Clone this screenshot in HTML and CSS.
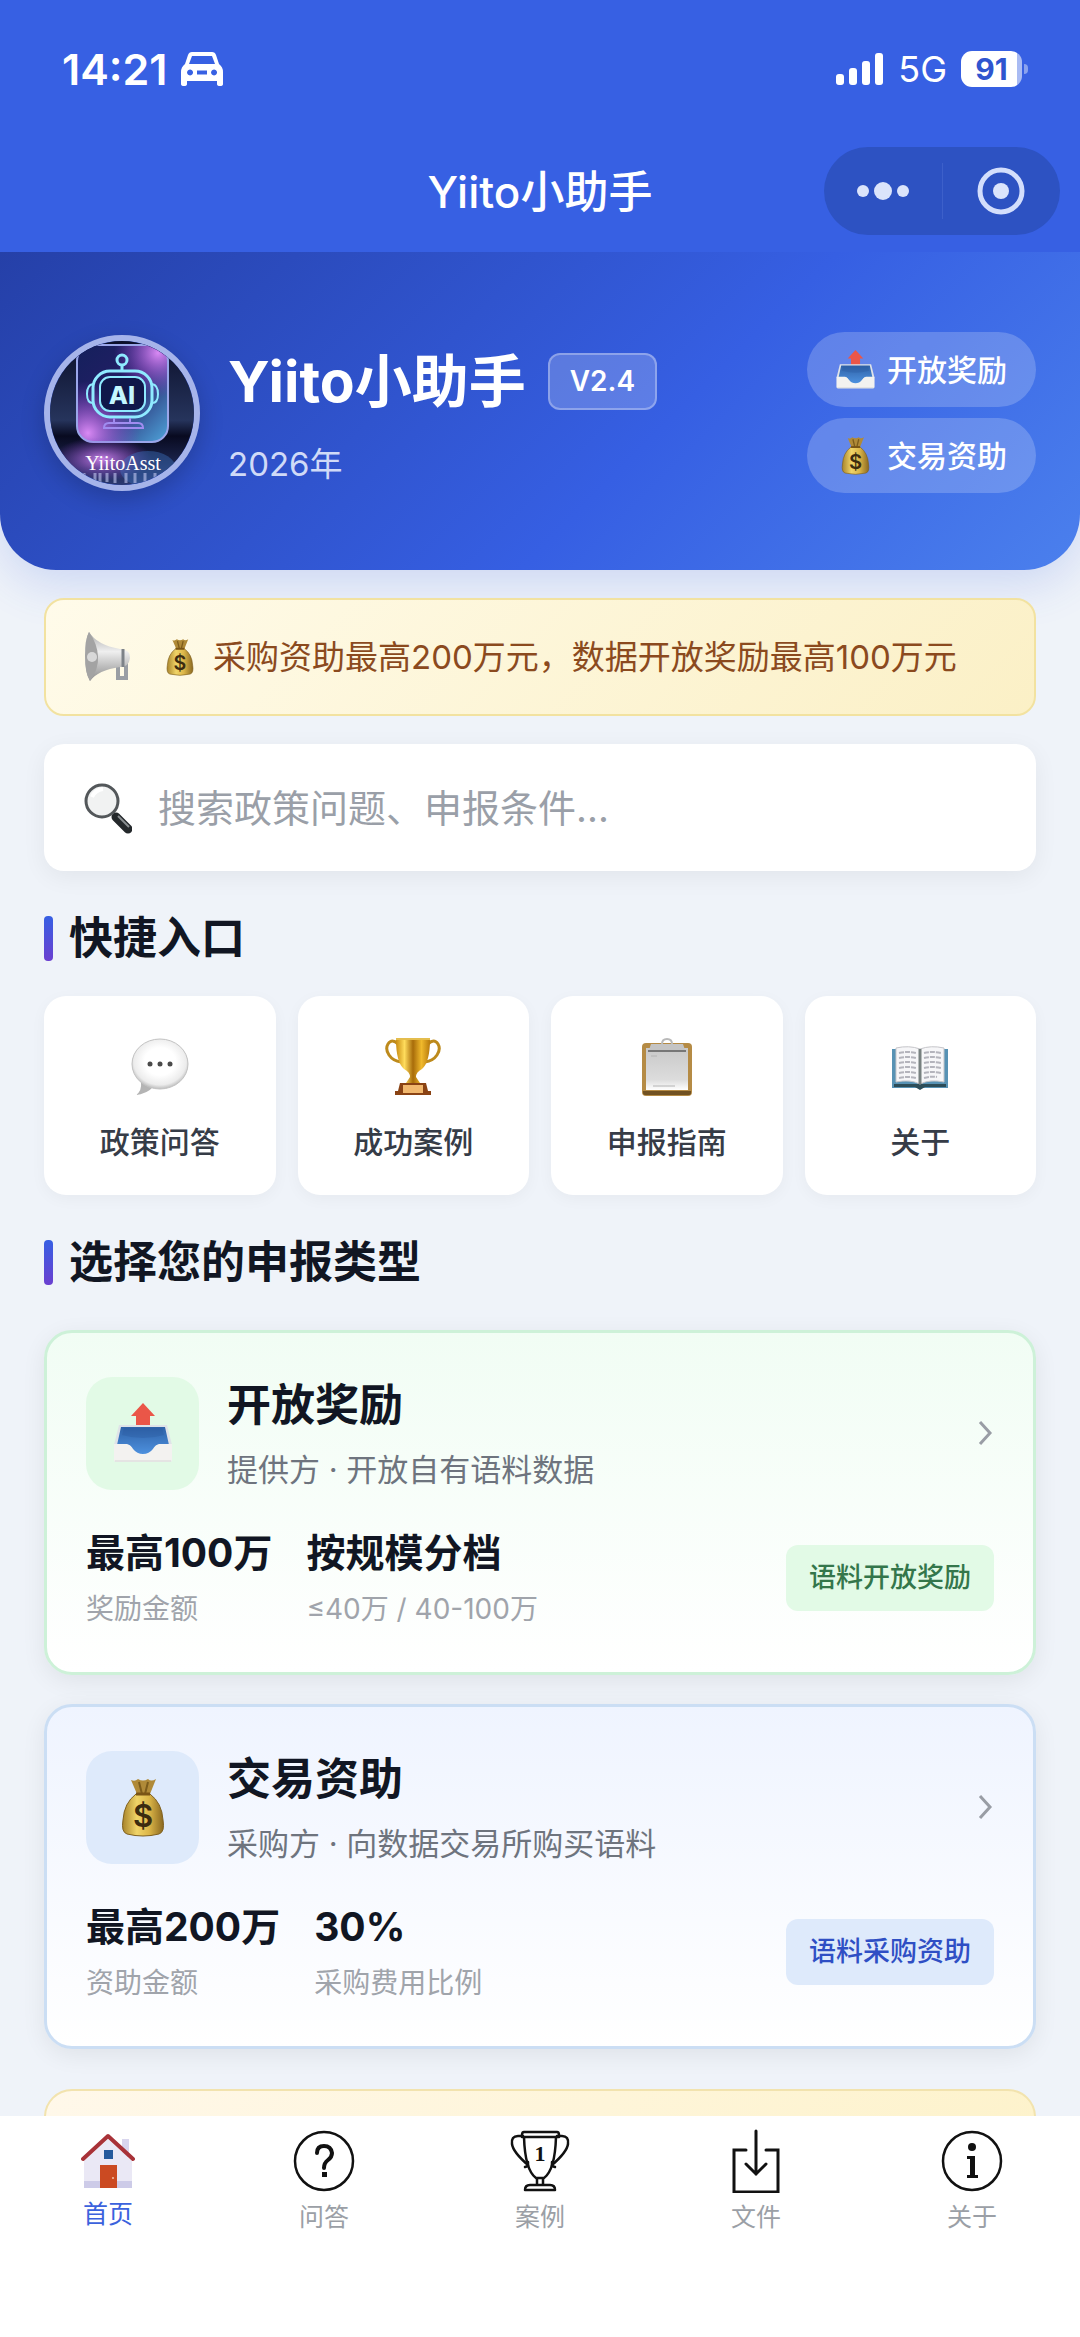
FILE: index.html
```html
<!DOCTYPE html>
<html lang="zh-CN">
<head>
  <meta charset="UTF-8">
  <meta name="viewport" content="width=device-width, initial-scale=1">
  <title>Yiito小助手</title>
  <link rel="stylesheet" href="styles.css">
</head>
<body>

  <!-- Shared icons -->
  <svg class="sprite" aria-hidden="true">
    <defs>
      <linearGradient id="gold" x1="0" x2="1" y1="0" y2="0">
        <stop offset="0" stop-color="#a8842c"/>
        <stop offset=".35" stop-color="#f0d468"/>
        <stop offset=".65" stop-color="#dcb648"/>
        <stop offset="1" stop-color="#8a6820"/>
      </linearGradient>
      <linearGradient id="cup" x1="0" x2="1" y1="0" y2="0">
        <stop offset="0" stop-color="#c98d12"/>
        <stop offset=".25" stop-color="#ffdc5c"/>
        <stop offset=".5" stop-color="#a86c0a"/>
        <stop offset=".75" stop-color="#f0b92c"/>
        <stop offset="1" stop-color="#b87a0c"/>
      </linearGradient>
      <linearGradient id="blue" x1="0" x2="0" y1="0" y2="1">
        <stop offset="0" stop-color="#2f62a8"/>
        <stop offset="1" stop-color="#4f94e2"/>
      </linearGradient>
      <linearGradient id="horn" x1="0" x2="0" y1="0" y2="1">
        <stop offset="0" stop-color="#a9a9a9"/>
        <stop offset=".4" stop-color="#efefef"/>
        <stop offset="1" stop-color="#8c8c8c"/>
      </linearGradient>
      <radialGradient id="bubble" cx=".5" cy=".45" r=".55">
        <stop offset=".5" stop-color="#ffffff"/>
        <stop offset=".85" stop-color="#ececec"/>
        <stop offset="1" stop-color="#bdbdbd"/>
      </radialGradient>
      <linearGradient id="paper" x1="0" x2="0" y1="0" y2="1">
        <stop offset="0" stop-color="#c9c9c9"/>
        <stop offset=".75" stop-color="#dcdcdc"/>
        <stop offset="1" stop-color="#ffffff"/>
      </linearGradient>
    </defs>
    <symbol id="icon-tray" viewBox="0 0 60 60">
      <path d="M30 0 42 13H37V23H23V13H18Z" fill="#ea5648"/>
      <path d="M6 22H54L59 42V57Q59 59 57 59H3Q1 59 1 57V42Z" fill="#dfe3e8"/>
      <path d="M8 24H52L56 42H44L36 51Q30 55 24 51L16 42H4Z" fill="url(#blue)"/>
      <path d="M11 25H49L51 32Q30 38 9 32Z" fill="#28579c" opacity=".3"/>
      <path d="M1 41H14Q18 42 20 46Q24 51 30 51T40 46Q42 42 46 41H59V57Q59 59 57 59H3Q1 59 1 57Z" fill="#f3f2f0"/>
      <path d="M2 58H58" stroke="#d6d6d6" stroke-width="1"/>
    </symbol>
    <symbol id="icon-bag" viewBox="0 0 60 60">
      <path d="M18 3Q22 5 25 2Q30 5 35 2Q38 5 43 2L37 17H24Z" fill="#b08a38"/>
      <path d="M26 5 29 17M35 5 32 17" stroke="#7c5c1c" stroke-width="2"/>
      <path d="M23 17H37Q49 26 50 43Q52 55 46 57Q30 61 14 57Q8 55 10 43Q11 26 23 17Z" fill="url(#gold)" stroke="#80611f" stroke-width="1"/>
      <path d="M23 17H37" stroke="#7a5516" stroke-width="3"/>
    </symbol>
  </svg>

  <div class="app">

    <header class="top">
      <div class="status">
        <div class="status-left">
          <span class="time">14:21</span>
          <svg class="car" viewBox="0 0 42 34" aria-hidden="true">
            <path fill="#fff" fill-rule="evenodd" d="M11 0H31Q34 0 35 3L38 12Q42 15 42 20V32Q42 34 39 34Q36 34 36 32V29H6V32Q6 34 3 34Q0 34 0 32V20Q0 15 4 12L7 3Q8 0 11 0ZM11 4 8 12H34L31 4ZM9 17.500a3 3 0 1 0 .1 0ZM33 17.500a3 3 0 1 0 .1 0ZM16 18.500H26V22.500H16Z"/>
          </svg>
        </div>
        <div class="status-right">
          <svg class="signal" viewBox="0 0 48 32" aria-hidden="true">
            <g fill="#fff">
              <rect x="0" y="21" width="8" height="11" rx="3"/>
              <rect x="13" y="15" width="8" height="17" rx="3"/>
              <rect x="26" y="8" width="8" height="24" rx="3"/>
              <rect x="39" y="0" width="8" height="32" rx="3"/>
            </g>
          </svg>
          <span class="network">5G</span>
          <span class="battery">91</span>
        </div>
      </div>
      <div class="nav">
        <span class="nav-title">Yiito小助手</span>
        <div class="capsule">
          <button type="button" class="capsule-button" aria-label="更多">
            <svg viewBox="0 0 54 20" width="54" height="20">
              <g fill="#dbe4fb"><circle cx="7" cy="10" r="6"/><circle cx="27" cy="10" r="9"/><circle cx="47" cy="10" r="6"/></g>
            </svg>
          </button>
          <button type="button" class="capsule-button" aria-label="关闭">
            <svg viewBox="0 0 48 48" width="48" height="48">
              <circle cx="24" cy="24" r="21" fill="none" stroke="#d3defc" stroke-width="5"/>
              <circle cx="24" cy="24" r="8" fill="#dbe4fb"/>
            </svg>
          </button>
        </div>
      </div>
    </header>

    <main class="content">

      <!-- Banner -->
      <section class="hero">
        <svg class="avatar" viewBox="0 0 144 144" role="img" aria-label="YiitoAsst">
          <defs>
            <linearGradient id="night" x1="0" x2="0" y1="0" y2="1">
              <stop offset="0" stop-color="#0b0f2a"/>
              <stop offset=".55" stop-color="#26345c"/>
              <stop offset=".66" stop-color="#080a20"/>
              <stop offset="1" stop-color="#2c3a72"/>
            </linearGradient>
            <linearGradient id="tile" x1="0" x2="1" y1="0" y2="1">
              <stop offset="0" stop-color="#14205c"/>
              <stop offset=".5" stop-color="#241e66"/>
              <stop offset="1" stop-color="#4fa6dc"/>
            </linearGradient>
            <radialGradient id="pink"><stop offset="0" stop-color="#d98af4"/><stop offset="1" stop-color="#8a3fd0" stop-opacity="0"/></radialGradient>
            <clipPath id="tile-clip"><rect x="27" y="4" width="91" height="97" rx="16"/></clipPath>
          </defs>
          <rect width="144" height="144" fill="url(#night)"/>
          <g clip-path="url(#tile-clip)">
            <rect x="27" y="4" width="91" height="97" fill="url(#tile)"/>
            <circle cx="108" cy="12" r="44" fill="url(#pink)"/>
            <circle cx="38" cy="92" r="52" fill="url(#pink)"/>
          </g>
          <rect x="27" y="4" width="91" height="97" rx="16" fill="none" stroke="#9aa6ea" stroke-width="2"/>
          <ellipse cx="52" cy="118" rx="50" ry="22" fill="url(#pink)" opacity=".9"/>
          <ellipse cx="98" cy="128" rx="28" ry="18" fill="#3f78c8" opacity=".4"/>
          <g fill="none" stroke="#8feaff" stroke-width="3">
            <circle cx="72" cy="19" r="5"/>
            <path d="M72 24V29"/>
            <rect x="43" y="30" width="59" height="46" rx="17"/>
            <rect x="50" y="36" width="45" height="34" rx="10" stroke-width="2" fill="#10174a"/>
            <path d="M43 43Q37 44 37 53T43 62M102 43Q108 44 108 53T102 62" stroke-width="2"/>
            <path d="M64 77V81M80 77V81M54 87Q54 82 59 82H88Q93 82 93 87Z" stroke-width="2" stroke="#a08cf0"/>
          </g>
          <text x="72" y="63" text-anchor="middle" class="avatar-ai">AI</text>
          <text x="73" y="129" text-anchor="middle" class="avatar-name">YiitoAsst</text>
          <path d="M34 132V138M45 132V142M50 132V142M57 132V141M65 132V142M76 132V142M85 132V142M95 132V141M105 132V138" stroke="#c4c9f2" stroke-width="3" opacity=".6"/>
        </svg>
        <div class="hero-text">
          <div class="hero-heading">
            <h1>Yiito小助手</h1>
            <span class="version">V2.4</span>
          </div>
          <p class="year">2026年</p>
        </div>
        <div class="hero-actions">
          <button type="button" class="pill"><svg class="pill-icon"><use href="#icon-tray"/></svg><span>开放奖励</span></button>
          <button type="button" class="pill">
            <svg class="pill-icon" viewBox="0 0 60 60" aria-hidden="true"><use href="#icon-bag"/><text x="30" y="50" text-anchor="middle" class="bag-sign">$</text></svg>
            <span>交易资助</span>
          </button>
        </div>
      </section>

      <div class="page">
        <!-- Notice -->
        <div class="notice">
          <svg class="row-icon" viewBox="0 0 48 52" aria-hidden="true">
            <path d="M34 32V47H42V22" fill="none" stroke="#9a9ea4" stroke-width="4"/>
            <path d="M5 1Q13 14 36 18Q47 19 46 27Q45 36 36 36Q14 39 6 50Q1 42 1 25T5 1Z" fill="url(#horn)"/>
            <path d="M5 1Q13 12 14 25T6 50Q1 42 1 25T5 1Z" fill="#a3a3a3"/>
            <circle cx="8" cy="26" r="5" fill="#d8d8d8"/>
            <path d="M39 18V36" stroke="#7d8288" stroke-width="3"/>
          </svg>
          <svg class="notice-bag" viewBox="0 0 60 60" aria-hidden="true"><use href="#icon-bag"/><text x="30" y="50" text-anchor="middle" class="bag-sign">$</text></svg>
          <span>采购资助最高200万元，数据开放奖励最高100万元</span>
        </div>

        <!-- Search -->
        <label class="search">
          <svg class="row-icon" viewBox="0 0 48 52" aria-hidden="true">
            <path d="M30 33 36 39" stroke="#8b8b8b" stroke-width="4"/>
            <path d="M32 35 44 47" stroke="#24282b" stroke-width="9" stroke-linecap="round"/>
            <path d="M34 34 45 45" stroke="#8a8e91" stroke-width="2"/>
            <circle cx="18" cy="19" r="16" fill="#f1f2f2" stroke="#53575a" stroke-width="3"/>
            <path d="M8 15Q11 8 19 7" fill="none" stroke="#fff" stroke-width="4"/>
          </svg>
          <input type="text" class="search-input" placeholder="搜索政策问题、申报条件..." aria-label="搜索">
        </label>

        <h2 class="section-title">快捷入口</h2>
        <div class="shortcuts">
          <a href="#" class="shortcut">
            <svg viewBox="0 0 58 58" aria-hidden="true">
              <path d="M10 44Q11 53 5 57Q16 56 23 48Z" fill="#b4b4b4"/>
              <ellipse cx="29" cy="26" rx="28" ry="25" fill="url(#bubble)" stroke="#c2c2c2" stroke-width="1"/>
              <g fill="#4a4a4a"><circle cx="19" cy="26" r="2.500"/><circle cx="29" cy="26" r="2.500"/><circle cx="39" cy="26" r="2.500"/></g>
            </svg>
            <span>政策问答</span>
          </a>
          <a href="#" class="shortcut">
            <svg viewBox="0 0 58 58" aria-hidden="true">
              <path d="M14 6Q8 0 4 6Q1 11 5 17Q9 23 17 24M44 6Q50 0 54 6Q57 11 53 17Q49 23 41 24" fill="none" stroke="#bd8a1c" stroke-width="3"/>
              <path d="M12 1H46Q46 24 38 31Q32 34 32 39L36 45H22L26 39Q26 34 20 31Q12 24 12 1Z" fill="url(#cup)"/>
              <path d="M12 1H46" stroke="#e4bd4e" stroke-width="2"/>
              <path d="M16 45H42L44 53H47V57H11V53H14Z" fill="#8a4314"/>
              <rect x="19" y="47" width="20" height="8" fill="#f1b86e"/>
            </svg>
            <span>成功案例</span>
          </a>
          <a href="#" class="shortcut">
            <svg viewBox="0 0 58 58" aria-hidden="true">
              <rect x="4" y="5" width="50" height="53" rx="4" fill="#b58b45"/>
              <path d="M5 53H53V55Q53 57 50 57H8Q5 57 5 55Z" fill="#715222"/>
              <rect x="8" y="10" width="42" height="42" fill="url(#paper)"/>
              <path d="M13 6H45L47 12H11Z" fill="#c4c4c4"/>
              <path d="M10 13H48" stroke="#777" stroke-width="2"/>
              <path d="M24 6Q24 1 29 1T34 6" fill="none" stroke="#b9b9b9" stroke-width="2"/>
              <path d="M13 18H19M15 48H37" stroke="#b4b4b4" stroke-width="1"/>
            </svg>
            <span>申报指南</span>
          </a>
          <a href="#" class="shortcut">
            <svg viewBox="0 0 58 58" aria-hidden="true">
              <path d="M1 11H57V50H1Z" fill="#5792b4"/>
              <path d="M3 46H55V49H34L29 52L24 49H3Z" fill="#2d4d58"/>
              <path d="M5 10Q18 7 29 11Q40 7 53 10V44Q39 41 29 46Q19 41 5 44Z" fill="#f6f6f8" stroke="#c5c5c9" stroke-width="1"/>
              <path d="M29 11V46" stroke="#77807f" stroke-width="3"/>
              <path d="M8 15Q17 13 25 15M8 20Q17 18 25 20M8 25Q17 23 25 25M8 30Q17 28 25 30M8 35Q17 33 25 35M8 40Q17 38 25 40M33 15Q41 13 50 15M33 20Q41 18 50 20M33 25Q41 23 50 25M33 30Q41 28 50 30M33 35Q41 33 50 35M33 40Q40 38 46 39" fill="none" stroke="#b4b4bc" stroke-width="2" stroke-dasharray="5 1"/>
            </svg>
            <span>关于</span>
          </a>
        </div>

        <h2 class="section-title">选择您的申报类型</h2>
        <div class="types">
          <article class="type-card green">
            <div class="type-head">
              <div class="type-icon"><svg><use href="#icon-tray"/></svg></div>
              <div class="type-text">
                <h3>开放奖励</h3>
                <p>提供方 · 开放自有语料数据</p>
              </div>
              <svg class="arrow" viewBox="0 0 18 26" aria-hidden="true"><path d="M4 2 14 13 4 24"/></svg>
            </div>
            <div class="type-foot">
              <dl class="stat"><dt>最高100万</dt><dd>奖励金额</dd></dl>
              <dl class="stat"><dt>按规模分档</dt><dd>≤40万 / 40-100万</dd></dl>
              <span class="tag">语料开放奖励</span>
            </div>
          </article>

          <article class="type-card blue">
            <div class="type-head">
              <div class="type-icon">
                <svg viewBox="0 0 60 60" aria-hidden="true"><use href="#icon-bag"/><text x="30" y="50" text-anchor="middle" class="bag-sign">$</text></svg>
              </div>
              <div class="type-text">
                <h3>交易资助</h3>
                <p>采购方 · 向数据交易所购买语料</p>
              </div>
              <svg class="arrow" viewBox="0 0 18 26" aria-hidden="true"><path d="M4 2 14 13 4 24"/></svg>
            </div>
            <div class="type-foot">
              <dl class="stat"><dt>最高200万</dt><dd>资助金额</dd></dl>
              <dl class="stat"><dt>30%</dt><dd>采购费用比例</dd></dl>
              <span class="tag">语料采购资助</span>
            </div>
          </article>
        </div>

        <div class="tips"></div>
      </div>
    </main>

    <nav class="tabs">
      <a href="#" class="tab active">
        <svg class="tab-home" viewBox="0 0 54 56" aria-hidden="true">
          <rect x="41" y="6" width="7" height="18" fill="#d9d6ee"/>
          <path d="M27 6 51 28V55H3V28Z" fill="#eae8f5"/>
          <path d="M3 48H51V55H3Z" fill="#cdcbe8"/>
          <rect x="23" y="17" width="9" height="9" fill="#25599c"/>
          <rect x="19" y="32" width="17" height="23" fill="#cb4a22"/>
          <circle cx="32" cy="45" r="1" fill="#f3c0a8"/>
          <path d="M2 26 27 3 52 26" fill="none" stroke="#a83238" stroke-width="4" stroke-linecap="round" stroke-linejoin="round"/>
        </svg>
        <span>首页</span>
      </a>
      <a href="#" class="tab">
        <svg viewBox="0 0 64 64" aria-hidden="true">
          <g fill="none" stroke="#111" stroke-width="2.500">
            <circle cx="32" cy="32" r="29"/>
            <path d="M25 24Q25 17 32 17T40 24Q40 28 36 31T32 39" stroke-width="4" stroke-linecap="round"/>
          </g>
          <rect x="30" y="43" width="5" height="5" fill="#111"/>
        </svg>
        <span>问答</span>
      </a>
      <a href="#" class="tab">
        <svg viewBox="0 0 64 64" aria-hidden="true">
          <g fill="none" stroke="#111" stroke-width="2.500" stroke-linejoin="round" stroke-linecap="round">
            <path d="M16 3H49Q51 3 51 6V8H14V6Q14 3 16 3ZM16 8Q17 41 28 49H36Q47 41 48 8M29 49V55M35 49V55M22 56H42Q47 56 47 61H17Q17 56 22 56Z"/>
            <path d="M15 7H10Q3 7 4 15Q5 23 20 36M49 7H54Q61 7 60 15Q59 23 44 36M17 38 20 37V33M47 38 44 37V33"/>
          </g>
          <text x="32" y="32" text-anchor="middle" class="cup-one">1</text>
        </svg>
        <span>案例</span>
      </a>
      <a href="#" class="tab">
        <svg viewBox="0 0 64 64" aria-hidden="true">
          <g fill="none" stroke="#111" stroke-width="3" stroke-linecap="round">
            <path d="M22 21H10V63H54V21H42"/>
            <path d="M32 2V45M22 35 32 45 42 35"/>
          </g>
        </svg>
        <span>文件</span>
      </a>
      <a href="#" class="tab">
        <svg viewBox="0 0 64 64" aria-hidden="true">
          <circle cx="32" cy="32" r="29" fill="none" stroke="#111" stroke-width="2.500"/>
          <circle cx="32" cy="18" r="4" fill="#111"/>
          <path d="M27 27H35V46H38V49H27V46H30V30H27Z" fill="#111"/>
        </svg>
        <span>关于</span>
      </a>
    </nav>

  </div>

</body>
</html>
```
FILE: styles.css
```css
* {
  box-sizing: border-box;
}

body {
  font-family: Inter, "Noto Sans CJK SC", sans-serif;
  background: #eff3f9;
  margin: 0;
  color: #111623;
}

h1, h2, h3, p, dl, dd {
  margin: 0;
}

a {
  color: inherit;
  text-decoration: none;
}

button {
  font-family: inherit;
  border: none;
  cursor: pointer;
}

svg {
  display: block;
  flex: none;
}

.sprite {
  position: absolute;
  width: 0;
  height: 0;
}

.bag-sign {
  font-size: 31px;
  font-weight: 600;
  fill: #3c2c10;
}

.app {
  display: flex;
  flex-direction: column;
  height: 100vh;
}

/* Header */
.top {
  background: #3760e3;
  color: white;
}

.status {
  display: flex;
  justify-content: space-between;
  align-items: center;
  height: 137px;
  padding: 0 48px 0 62px;
}

.status-left, .status-right {
  display: flex;
  align-items: center;
}

.time {
  font-size: 43px;
  font-weight: 600;
}

.car {
  width: 42px;
  height: 34px;
  margin-left: 13px;
}

.signal {
  width: 48px;
  height: 32px;
}

.network {
  font-size: 36px;
  margin: 0 14px;
}

.battery {
  position: relative;
  width: 61px;
  line-height: 36px;
  border-radius: 11px;
  background: linear-gradient(to right, #fff 91%, #a9bbf3 91%);
  color: #2f55cf;
  font-size: 30px;
  font-weight: 700;
  text-align: center;
  margin-right: 10px;
}

.battery::after {
  content: "";
  position: absolute;
  right: -6px;
  top: 13px;
  width: 4px;
  height: 10px;
  border-radius: 0 4px 4px 0;
  background: #8aa2ee;
}

.nav {
  display: grid;
  grid-template-columns: 1fr auto 1fr;
  align-items: center;
  padding: 10px 20px 17px;
}

.nav-title {
  grid-column: 2;
  padding-bottom: 5px;
  font-size: 44px;
  font-weight: 500;
}

.capsule {
  justify-self: end;
  display: flex;
  align-items: center;
  width: 236px;
  height: 88px;
  border-radius: 44px;
  background: #2d52c2;
}

.capsule-button {
  flex: 1;
  display: flex;
  justify-content: center;
  background: none;
  padding: 20px 0;
}

.capsule-button + .capsule-button {
  border-left: 1px solid #3d60ca;
  padding: 4px 0;
}

/* Banner */
.content {
  flex: 1;
  min-height: 0;
  overflow-y: auto;
  scrollbar-width: none;
}

.hero {
  display: flex;
  align-items: center;
  padding: 80px 44px 77px;
  border-radius: 0 0 56px 56px;
  background: linear-gradient(135deg, #2540a8 0%, #365fe3 60%, #4b80ed 100%);
  box-shadow: 0 12px 48px rgba(55, 96, 227, 0.2);
  color: white;
}

.avatar {
  width: 156px;
  height: 156px;
  border: 6px solid #a6b4ea;
  border-radius: 50%;
  box-shadow: 0 8px 24px rgba(0, 0, 0, 0.2);
}

.avatar-ai {
  font-size: 25px;
  font-weight: 800;
  fill: #c4f6ff;
}

.avatar-name {
  font-family: "Liberation Serif", serif;
  font-size: 20px;
  font-weight: 400;
  fill: white;
}

.hero-text {
  flex: 1;
  margin-left: 28px;
  padding-top: 10px;
}

.hero-heading {
  display: flex;
  align-items: center;
  gap: 22px;
}

h1 {
  font-size: 57px;
  line-height: 64px;
  font-weight: 700;
}

.version {
  padding: 0 20px;
  border: 2px solid rgba(255, 255, 255, 0.3);
  border-radius: 12px;
  background: rgba(255, 255, 255, 0.2);
  font-size: 28px;
  line-height: 53px;
  font-weight: 600;
}

.year {
  margin-top: 28px;
  font-size: 33px;
  line-height: 44px;
  color: #d0daf7;
}

.hero-actions {
  display: flex;
  flex-direction: column;
  gap: 11px;
}

.pill {
  display: flex;
  align-items: center;
  gap: 12px;
  height: 75px;
  padding: 0 29px;
  border-radius: 38px;
  background: rgba(255, 255, 255, 0.2);
  color: white;
  font-size: 30px;
  font-weight: 500;
}

.pill span {
  padding-bottom: 4px;
}

.pill-icon {
  width: 39px;
  height: 39px;
}

/* Page body */
.page {
  padding: 28px 44px;
}

.notice, .search {
  display: flex;
  align-items: center;
  padding: 0 40px;
  border-radius: 20px;
}

.notice {
  height: 118px;
  padding: 0 38px;
  border: 2px solid #f2e2a0;
  background: linear-gradient(135deg, #fffbea, #fbf0c6);
  color: #8b4a1e;
  font-size: 33px;
  white-space: nowrap;
}

.notice span {
  padding-bottom: 4px;
}

.row-icon {
  width: 48px;
  height: 52px;
}

.notice-bag {
  width: 38px;
  height: 38px;
  margin: 0 14px 0 29px;
}

.search {
  height: 127px;
  margin-top: 28px;
  background: white;
  box-shadow: 0 6px 24px rgba(0, 0, 0, 0.06);
}

.search-input {
  flex: 1;
  min-width: 0;
  margin-left: 26px;
  padding: 0;
  border: none;
  outline: none;
  background: none;
  font-family: inherit;
  font-size: 38px;
}

.search-input::placeholder {
  color: #9a9fa8;
}

.section-title {
  display: flex;
  align-items: center;
  gap: 16px;
  margin: 37px 0 28px;
  font-size: 44px;
  line-height: 60px;
  font-weight: 700;
}

.section-title::before {
  content: "";
  width: 9px;
  height: 45px;
  border-radius: 4px;
  background: linear-gradient(#365fe3, #6b3fd0);
}

.shortcuts {
  display: grid;
  grid-template-columns: repeat(4, 1fr);
  gap: 22px;
}

.shortcut {
  display: flex;
  flex-direction: column;
  align-items: center;
  gap: 26px;
  height: 199px;
  padding-top: 42px;
  border-radius: 22px;
  background: white;
  box-shadow: 0 4px 16px rgba(0, 0, 0, 0.04);
  color: #363c47;
  font-size: 30px;
  line-height: 40px;
  font-weight: 500;
}

.shortcut svg {
  width: 58px;
  height: 58px;
}

/* Application types */
.types {
  display: grid;
  gap: 29px;
  margin-top: 38px;
}

.type-card {
  padding: 43px 39px 45px;
  border: 3px solid;
  border-radius: 28px;
  box-shadow: 0 6px 24px rgba(0, 0, 0, 0.07);
}

.green {
  border-color: #cdf1d8;
  background: linear-gradient(#f1fdf4, #ffffff);
}

.blue {
  border-color: #cbdef4;
  background: linear-gradient(#eff4ff, #ffffff);
}

.type-head {
  display: flex;
  align-items: center;
}

.type-icon {
  display: grid;
  place-items: center;
  width: 113px;
  height: 113px;
  border-radius: 26px;
}

.type-icon svg {
  width: 60px;
  height: 60px;
}

.green .type-icon, .green .tag {
  background: #e2fae6;
}

.blue .type-icon, .blue .tag {
  background: #deeafb;
}

.type-text {
  flex: 1;
  margin-left: 28px;
}

h3 {
  font-size: 44px;
  line-height: 58px;
  font-weight: 700;
}

.type-text p {
  margin-top: 16px;
  font-size: 31px;
  line-height: 40px;
  color: #6e747e;
}

.arrow {
  width: 18px;
  height: 26px;
  fill: none;
  stroke: #999da5;
  stroke-width: 3;
}

.type-foot {
  display: flex;
  align-items: center;
  gap: 34px;
  margin-top: 38px;
}

.stat dt {
  font-size: 39px;
  line-height: 50px;
  font-weight: 700;
}

.stat dd {
  margin-top: 13px;
  font-size: 28px;
  line-height: 36px;
  color: #a0a4ab;
}

.tag {
  margin-left: auto;
  padding: 0 23px;
  border-radius: 12px;
  font-size: 27px;
  line-height: 66px;
  font-weight: 500;
}

.green .tag {
  color: #34764b;
}

.blue .tag {
  color: #2f4fc4;
}

.tips {
  height: 160px;
  margin-top: 40px;
  border: 2px solid #f2e3ae;
  border-radius: 28px;
  background: linear-gradient(135deg, #fff8ea, #fdf2c8);
}

/* Tab bar */
.tabs {
  display: grid;
  grid-template-columns: repeat(5, 1fr);
  height: 221px;
  padding-top: 13px;
  background: white;
}

.tab {
  display: flex;
  flex-direction: column;
  align-items: center;
  font-size: 25px;
  line-height: 36px;
  color: #9b9fa6;
}

.tab svg {
  width: 64px;
  height: 64px;
  margin-bottom: 6px;
}

.tab .tab-home {
  width: 54px;
  height: 56px;
  margin: 4px 0 7px;
}

.active {
  color: #3b62dd;
}

.cup-one {
  font-family: "Liberation Serif", serif;
  font-size: 22px;
  font-weight: 700;
  fill: #111;
}
```
